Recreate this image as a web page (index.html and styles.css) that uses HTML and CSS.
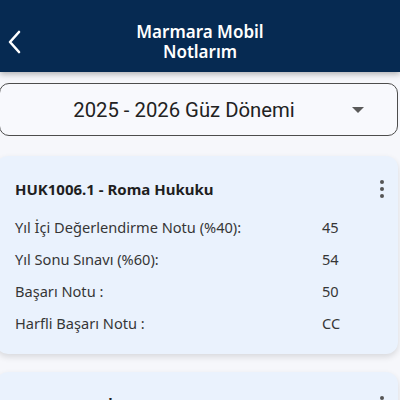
FILE: index.html
```html
<!DOCTYPE html>
<html lang="tr">
<head>
  <meta charset="UTF-8" />
  <meta name="viewport" content="width=device-width, initial-scale=1.0"/>
  <title>Marmara Mobil - Notlarım</title>
  <link rel="stylesheet" href="styles.css">
</head>
<body>
  <header class="topbar">
    <button class="back-btn" aria-label="Geri">
      <svg width="14" height="24" viewBox="0 0 14 24"><path d="M12 2 L3 12 L12 22" fill="none" stroke="#fff" stroke-width="2.6" stroke-linecap="round" stroke-linejoin="round"/></svg>
    </button>
    <div class="title">
      <div>Marmara Mobil</div>
      <div>Notlarım</div>
    </div>
    <span></span>
  </header>

  <div class="term-select">
    <span class="term-text">2025 - 2026 Güz Dönemi</span>
    <span class="caret"></span>
  </div>

  <div class="course-card">
    <div class="course-head">
      <span class="course-name">HUK1006.1 - Roma Hukuku</span>
      <span class="kebab"><i></i><i></i><i></i></span>
    </div>
    <div class="grade-rows">
      <span>Yıl İçi Değerlendirme Notu (%40):</span><span>45</span>
      <span>Yıl Sonu Sınavı (%60):</span><span>54</span>
      <span>Başarı Notu :</span><span>50</span>
      <span>Harfli Başarı Notu :</span><span>CC</span>
    </div>
  </div>

  <div class="course-card">
    <div class="course-head">
      <span class="course-name">HUK1002.1 - İktisat</span>
      <span class="kebab"><i></i><i></i><i></i></span>
    </div>
  </div>
</body>
</html>
```

FILE: styles.css
```css
body {
  margin: 0;
  font-family: "Noto Sans", Lato, sans-serif;
  background-color: #f6f7fb;
  color: #2b2b2b;
  overflow: hidden;
}
.topbar {
  height: 60px;
  padding-top: 12px;
  background-color: #062a52;
  color: white;
  display: grid;
  grid-template-columns: 40px 1fr 40px;
  align-items: center;
  box-shadow: 0 2px 6px rgba(0,0,0,0.3);
}
.back-btn {
  background: none;
  border: none;
  padding: 0 0 0 7px;
  height: 30px;
  display: flex;
  align-items: center;
  cursor: pointer;
}
.title {
  text-align: center;
  font-size: 17px;
  font-weight: 600;
  line-height: 20px;
}
.term-select {
  margin: 11px 2px 0 -1px;
  height: 51px;
  border: 1.5px solid #4d4d4d;
  border-radius: 10px;
  background: #f8f9fd;
  display: flex;
  align-items: center;
  padding: 0 33px 0 16px;
}
.term-text {
  flex: 1;
  text-align: center;
  font-family: Roboto, sans-serif;
  font-size: 20.3px;
  color: #222;
}
.caret {
  width: 0;
  height: 0;
  border-left: 6px solid transparent;
  border-right: 6px solid transparent;
  border-top: 6px solid #5a5a5a;
}
.course-card {
  margin: 20px 2px 0 -4px;
  padding: 23px 14px 15px 19px;
  background: #eaf2fd;
  border-radius: 12px;
  box-shadow: 0 3px 6px rgba(0,0,0,0.12);
}
.course-card + .course-card {
  margin-top: 18px;
}
.course-head {
  display: flex;
  justify-content: space-between;
  align-items: center;
  height: 20px;
}
.course-name {
  font-size: 15px;
  font-weight: 700;
  color: #1f1f1f;
}
.kebab {
  display: flex;
  flex-direction: column;
  gap: 3px;
}
.kebab i {
  width: 4px;
  height: 4px;
  border-radius: 50%;
  background: #555;
}
.grade-rows {
  margin-top: 12px;
  display: grid;
  grid-template-columns: 1fr 62px;
  grid-auto-rows: 32px;
  align-items: center;
  font-size: 14.6px;
  color: #363636;
}
```
